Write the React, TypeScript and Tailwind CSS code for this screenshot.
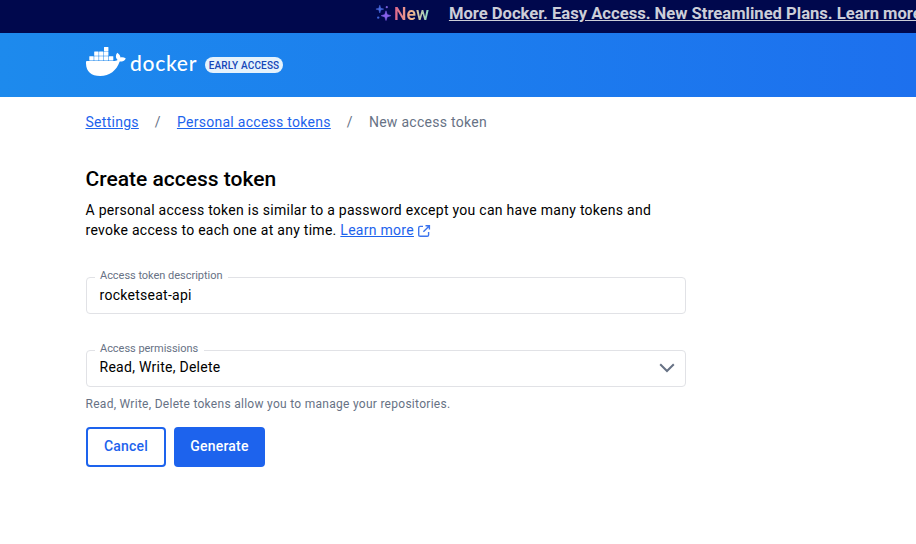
import React from "react";

function Whale() {
  const boxes = [
    [104, 47],
    [94.2, 51.6], [99.1, 51.6], [104, 51.6],
    [89.3, 56.2], [94.2, 56.2], [99.1, 56.2], [104, 56.2], [108.9, 56.2],
  ];
  return (
    <svg width="41" height="30" viewBox="86 47 41 30" fill="#fff" className="shrink-0" aria-hidden="true">
      {boxes.map(([x, y]) => (
        <rect key={`${x}-${y}`} x={x} y={y} width="4.4" height="4.2" rx="0.3" />
      ))}
      <path d="M86.9 61H113.6C115 61 116.6 60.5 117.6 59.9C115.4 57.6 115.4 55 117.2 52.8C119.1 54 120.2 55.6 120.5 57.4C122.3 57 124.3 57.3 125.8 58.4C124.7 60.7 122.4 61.7 119.7 61.6C116.4 70.8 109.8 76 100.2 76C90.6 76 85.7 71.2 86 62C86 61.4 86.3 61 86.9 61Z" />
    </svg>
  );
}

function Sparkles() {
  return (
    <svg width="17" height="18" viewBox="375 4 17 18" className="shrink-0" aria-hidden="true">
      <path d="M379.8 5.2L380.7 8.2L383.7 9.1L380.7 10L379.8 13L378.9 10L375.9 9.1L378.9 8.2Z" fill="#4a6be0" stroke="#4a6be0" strokeWidth="0.5" />
      <path d="M386 10.8L387.2 14.5L390.9 15.7L387.2 16.9L386 20.6L384.8 16.9L381.1 15.7L384.8 14.5Z" fill="#8660ea" stroke="#8660ea" strokeWidth="0.5" />
      <circle cx="386.8" cy="7.2" r="1.1" fill="#7a5fd8" />
      <circle cx="378.2" cy="17.6" r="1.2" fill="#3e62d6" />
    </svg>
  );
}

function Field({ label, value, valueClass, children }: { label: string; value: string; valueClass: string; children?: React.ReactNode }) {
  return (
    <fieldset className="h-[45px] w-[600px] rounded border border-[#e1e2e6] px-2">
      <legend className="h-4 pr-[6px] pl-[5px] text-[11px] leading-[14px] tracking-[-0.03px] text-[#677285]">{label}</legend>
      <div className="flex h-5 items-center justify-between pr-[2px] pl-[4.5px] text-sm leading-5">
        <span className={valueClass}>{value}</span>
        {children}
      </div>
    </fieldset>
  );
}

export default function App() {
  return (
    <div className="h-[544px] w-[916px] overflow-hidden bg-white font-['Roboto',sans-serif] text-black">
      <div className="flex h-[33px] items-start bg-[#00084d] pl-[375px] whitespace-nowrap">
        <div className="flex w-[55px] items-start pt-1">
          <Sparkles />
          <span className="ml-[2px] bg-linear-to-r from-[#d9608c] via-[#f2b48c] to-[#80d8c8] bg-clip-text text-[17.6px] leading-[20px] font-semibold text-transparent">New</span>
        </div>
        <a className="ml-5 pt-1 text-[16.6px] leading-[20px] font-bold text-[#ccced8] underline">More Docker. Easy Access. New Streamlined Plans. Learn more</a>
      </div>

      <header className="flex h-16 items-center bg-linear-to-r from-[#1d8aed] to-[#1d70ee] pl-[86px]">
        <div className="-mt-[6px] flex items-center">
          <Whale />
          <span className="ml-[3px] pt-[2px] font-['Lato',sans-serif] text-[21px] leading-6 font-medium tracking-[0.7px] text-white">docker</span>
        </div>
        <span className="ml-2 flex h-4 w-[78px] items-center justify-center rounded-full bg-[#e5f2fc] pt-px text-[10px] font-medium tracking-[0.15px] whitespace-nowrap text-[#1546b8]">EARLY ACCESS</span>
      </header>

      <main className="flex flex-col items-start pl-[85.5px]">
        <nav className="mt-[15px] flex h-5 gap-4 text-sm leading-5 tracking-[0.28px] text-[#677285]">
          <a className="text-[#1d63ed] underline">Settings</a>
          <span>/</span>
          <a className="text-[#1d63ed] underline">Personal access tokens</a>
          <span>/</span>
          <span>New access token</span>
        </nav>
        <h1 className="mt-[35px] text-[21px] leading-6 font-medium">Create access token</h1>
        <p className="mt-[9px] w-[600px] text-sm leading-5 tracking-[0.275px] whitespace-nowrap">
          A personal access token is similar to a password except you can have many tokens and<br />
          revoke access to each one at any time.{" "}
          <a className="text-[#1d63ed] underline">Learn more</a>
          <svg width="14" height="14" viewBox="0 0 14 14" fill="none" stroke="#3d75ee" strokeWidth="1.4" className="ml-[3px] inline-block" aria-hidden="true">
            <path d="M6 2.4H3.1Q1.7 2.4 1.7 3.8V10.9Q1.7 12.3 3.1 12.3H10.2Q11.6 12.3 11.6 10.9V8M8.5 1.7H12.4V5.6M12.2 1.9L6.4 7.7" />
          </svg>
        </p>
        <div className="mt-[29px] ml-[0.5px]">
          <Field label="Access token description" value="rocketseat-api" valueClass="tracking-[0.27px]" />
        </div>
        <div className="mt-7 ml-[0.5px]">
          <Field label="Access permissions" value="Read, Write, Delete" valueClass="-mt-[2px] tracking-[0.27px]">
            <svg width="16" height="10" viewBox="0 0 16 10" fill="none" stroke="#677285" strokeWidth="2" aria-hidden="true">
              <path d="M1.2 1.2L8 8L14.8 1.2" />
            </svg>
          </Field>
        </div>
        <p className="mt-[9px] text-xs leading-4 tracking-[0.28px] text-[#677285]">Read, Write, Delete tokens allow you to manage your repositories.</p>
        <div className="mt-[15px] ml-[0.5px] flex gap-2 text-sm font-medium tracking-[0.2px]">
          <button className="h-10 w-20 rounded border-2 border-[#1d63ed] pb-[2px] text-[#1d63ed]">Cancel</button>
          <button className="h-10 w-[91px] rounded bg-[#1d63ed] pb-[2px] text-white">Generate</button>
        </div>
      </main>
    </div>
  );
}
